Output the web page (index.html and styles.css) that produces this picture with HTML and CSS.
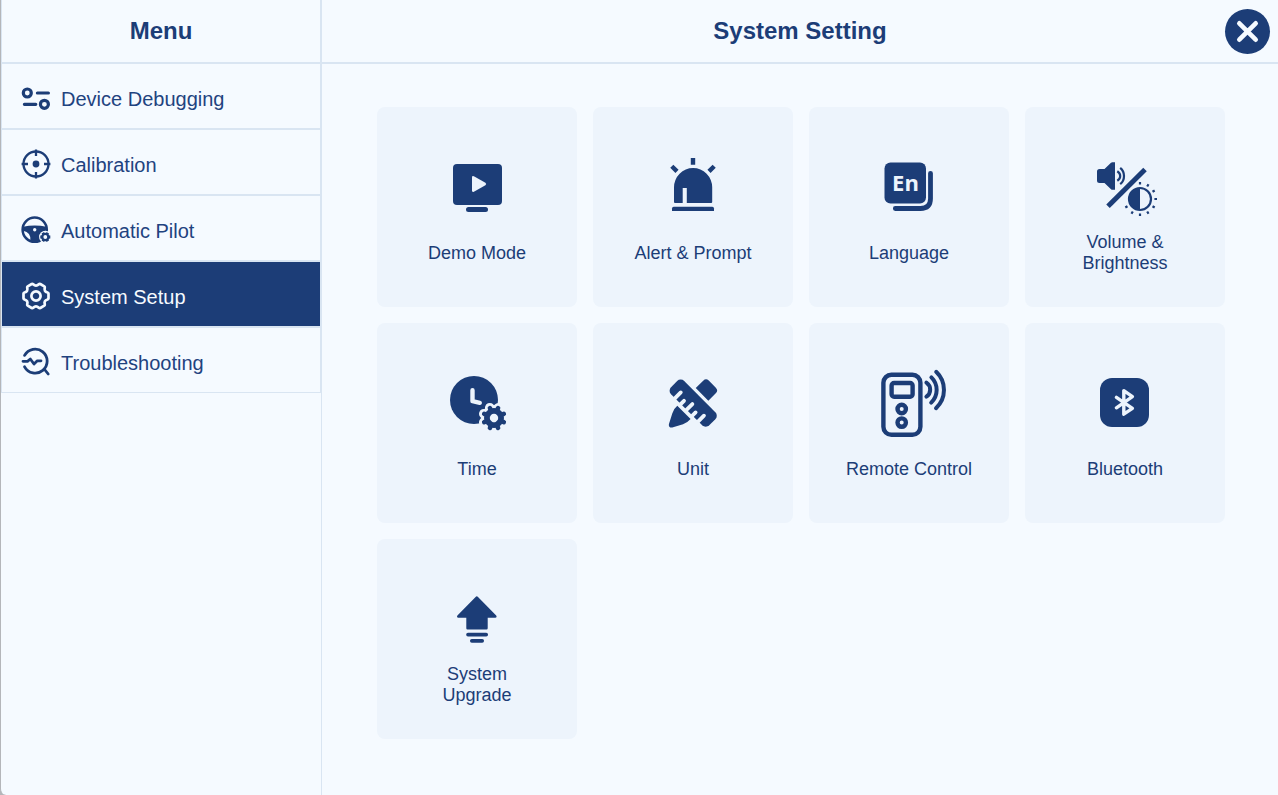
FILE: index.html
```
<!DOCTYPE html>
<html lang="en">
<head>
  <meta charset="utf-8">
  <meta name="viewport" content="width=device-width, initial-scale=1">
  <title>System Setting</title>
  <link rel="stylesheet" href="styles.css">
</head>
<body>
  <div class="app">
    <!-- Side menu -->
    <aside class="sidebar">
      <h2 class="sidebar-title">Menu</h2>
      <nav class="menu">
        <a class="menu-item" href="#debugging">
          <svg class="menu-icon" viewBox="0 0 30 30" fill="none" stroke="currentColor" stroke-width="3.2" stroke-linecap="round">
            <circle cx="6.3" cy="10" r="4"/>
            <path d="M16.4 10H27.4M3.4 21.3H14.8"/>
            <circle cx="23.4" cy="21.3" r="4"/>
          </svg>
          <span class="menu-label">Device Debugging</span>
        </a>
        <a class="menu-item" href="#calibration">
          <svg class="menu-icon" viewBox="0 0 30 30" fill="none" stroke="currentColor" stroke-width="2.3">
            <circle cx="15" cy="15" r="12.5"/>
            <path d="M15 .6V7M15 23V29.4M.6 15H7M23 15H29.4"/>
            <circle cx="15" cy="15" r="3.4" fill="currentColor" stroke="none"/>
          </svg>
          <span class="menu-label">Calibration</span>
        </a>
        <a class="menu-item" href="#pilot">
          <svg class="menu-icon" viewBox="0 0 30 30" fill="currentColor">
            <circle cx="13.7" cy="14.7" r="12.1" fill="none" stroke="currentColor" stroke-width="2.5"/>
            <path d="M2 11.8Q13.7 9.2 25.4 11.8V15.6Q18.6 16.6 18.6 26H9.4Q10.4 17.4 2 15.8Z"/>
            <circle class="cut" cx="13.7" cy="14.7" r="1.7"/>
            <circle class="cut" cx="24.3" cy="22" r="6.2"/>
            <circle cx="24.3" cy="22" r="3.1" fill="none" stroke="currentColor" stroke-width="2.4"/>
            <path d="M19.3 22H20.9M27.7 22H29.3M21.8 17.7L22.6 19.1M26 24.9L26.8 26.3M26.8 17.7L26 19.1M22.6 24.9L21.8 26.3" stroke="currentColor" stroke-width="2.8"/>
          </svg>
          <span class="menu-label">Automatic Pilot</span>
        </a>
        <a class="menu-item active" href="#setup" aria-current="page">
          <svg class="menu-icon" viewBox="-15 -15 30 30" fill="none" stroke="currentColor" stroke-width="2.7" stroke-linejoin="round">
            <path d="M12.5-2.4V2.4Q12.4 3.3 11.6 3.5Q9.6 4.1 8.9 5.3T8.8 8.3Q9 9.2 8.3 9.7L4.3 12Q3.4 12.3 2.8 11.7Q1.4 10.3 0 10.3T-2.8 11.7Q-3.4 12.3-4.3 12L-8.3 9.7Q-9 9.2-8.8 8.3Q-8.2 6.5-8.9 5.3T-11.6 3.5Q-12.4 3.3-12.5 2.4V-2.4Q-12.4-3.3-11.6-3.5Q-9.6-4.1-8.9-5.3T-8.8-8.3Q-9-9.2-8.3-9.7L-4.3-12Q-3.4-12.3-2.8-11.7Q-1.4-10.3 0-10.3T2.8-11.7Q3.4-12.3 4.3-12L8.3-9.7Q9-9.2 8.8-8.3Q8.2-6.5 8.9-5.3T11.6-3.5Q12.4-3.3 12.5-2.4Z"/>
            <circle r="4.6"/>
          </svg>
          <span class="menu-label">System Setup</span>
        </a>
        <a class="menu-item" href="#troubleshooting">
          <svg class="menu-icon" viewBox="0 0 30 30" fill="none" stroke="currentColor" stroke-width="2.8" stroke-linecap="round" stroke-linejoin="round">
            <path d="M3.6 8.4A12 12 0 1 1 3.6 19.8"/>
            <path d="M2 14.3H6.5L9.3 12L13 17L16.3 13.8H20M24 23L27.2 27"/>
          </svg>
          <span class="menu-label">Troubleshooting</span>
        </a>
      </nav>
    </aside>

    <main class="main">
      <header class="main-header">
        <h1 class="main-title">System Setting</h1>
        <button class="close-button" type="button" aria-label="Close">
          <svg viewBox="0 0 45 45" fill="none" stroke="currentColor" stroke-width="4.6" stroke-linecap="round">
            <path d="M14.3 14.3L30.7 30.7M30.7 14.3L14.3 30.7"/>
          </svg>
        </button>
      </header>

      <!-- Setting tiles -->
      <div class="tiles">
        <button class="tile" type="button">
          <svg class="tile-icon" viewBox="0 0 72 72" fill="currentColor">
            <rect x="12" y="12" width="49" height="41" rx="4"/>
            <rect x="25" y="55" width="22" height="5" rx="2.5"/>
            <path class="cut" d="M31 25.5Q31 23.4 32.9 24.3L44.4 30.8Q46 32 44.4 33.2L32.9 39.7Q31 40.6 31 38.5Z"/>
          </svg>
          <span class="tile-label">Demo Mode</span>
        </button>

        <button class="tile" type="button">
          <svg class="tile-icon" viewBox="0 0 72 72" fill="currentColor">
            <path d="M17 35.2A19.1 19.1 0 0 1 55.2 35.2V50Q55.2 51 54.2 51H29.8V36H25.7V51H18Q17 51 17 50Z"/>
            <path d="M15 59V56.5Q15 54.8 16.7 54.8H55.3Q57 54.8 57 56.5V59Z"/>
            <path d="M36 6V12.7M14.8 14.2L20 19.4M57.2 14.2L52 19.4" stroke="currentColor" stroke-width="4.4"/>
          </svg>
          <span class="tile-label">Alert &amp; Prompt</span>
        </button>

        <button class="tile" type="button">
          <svg class="tile-icon" viewBox="0 0 72 72" fill="currentColor">
            <rect x="11.5" y="10.5" width="41.5" height="41" rx="6"/>
            <path d="M57.5 21.3V46.5Q57.5 56.5 47.5 56.5H22.3" fill="none" stroke="currentColor" stroke-width="4.8" stroke-linecap="round"/>
            <text class="cut icon-text" x="32.5" y="39" text-anchor="middle">En</text>
          </svg>
          <span class="tile-label">Language</span>
        </button>

        <button class="tile" type="button">
          <svg class="tile-icon" viewBox="0 0 72 72" fill="currentColor">
            <path d="M10.5 17H15.5L22 10.7Q22.6 10.2 23.4 10.2H26V37.8H23.4Q22.6 37.8 22 37.3L15.5 31H10.5Q8 31 8 28.5V19.5Q8 17 10.5 17Z"/>
            <path d="M28.3 19.2Q31.2 21 31.2 24T28.3 28.8M31.2 15.8Q35 18.8 35 24T31.2 32.2" fill="none" stroke="currentColor" stroke-width="2.2"/>
            <path d="M19 54.2L56 17.4" stroke="currentColor" stroke-width="5"/>
            <g transform="translate(51 47)">
              <circle r="11" fill="none" stroke="currentColor" stroke-width="2.2"/>
              <path d="M0-11A11 11 0 0 0 0 11Z"/>
              <path d="M0-14.4V-17M7.2-12.5L8.5-14.7M12.5-7.2L14.7-8.5M14.4 0H17M12.5 7.2L14.7 8.5M7.2 12.5L8.5 14.7M0 14.4V17M-7.2 12.5L-8.5 14.7M-12.5 7.2L-14.7 8.5" stroke="currentColor" stroke-width="2.2"/>
            </g>
          </svg>
          <span class="tile-label">Volume &amp; Brightness</span>
        </button>

        <button class="tile" type="button">
          <svg class="tile-icon" viewBox="0 0 72 72" fill="currentColor">
            <circle cx="33" cy="32" r="24"/>
            <path class="cut-line" d="M31.5 22.3V33.2L38.8 34.8" stroke-width="4.4"/>
            <g transform="translate(53 50) rotate(22.5)">
              <circle class="cut" r="13"/>
              <path class="cut-line" d="M-11 0H11M0-11V11M-7.8-7.8L7.8 7.8M-7.8 7.8L7.8-7.8" stroke-width="9.6"/>
              <circle r="10"/>
              <path d="M-10.6 0H10.6M0-10.6V10.6M-7.5-7.5L7.5 7.5M-7.5 7.5L7.5-7.5" stroke="currentColor" stroke-width="4.6" stroke-linecap="round"/>
              <circle class="cut" r="4.2"/>
            </g>
          </svg>
          <span class="tile-label">Time</span>
        </button>

        <button class="tile" type="button">
          <svg class="tile-icon" viewBox="0 0 72 72" fill="currentColor">
            <g transform="translate(36.2 35.2) rotate(45)">
              <rect x="-27" y="-9.3" width="54" height="18.6" rx="5"/>
              <path class="cut-line" d="M-16.4 12V1.2M-8.2 12V4.8M0 12V1.2M8.2 12V4.8M16.4 12V1.2" stroke-width="3.8"/>
              <path d="M-8.9-12.5V-23Q-8.9-27-5-27H5Q8.9-27 8.9-23V-12.5Z"/>
              <path d="M-9.4 13.1H9.4Q9.8 18.4 7.6 22L2.4 32Q0 35-2.4 32L-7.6 22Q-9.8 18.4-9.4 13.1Z"/>
            </g>
          </svg>
          <span class="tile-label">Unit</span>
        </button>

        <button class="tile" type="button">
          <svg class="tile-icon" viewBox="0 0 72 72" fill="none" stroke="currentColor" stroke-width="4.4">
            <rect x="10.4" y="6.8" width="37" height="60" rx="8"/>
            <rect x="18.6" y="15" width="21" height="13.8" rx="2.5"/>
            <circle cx="28.7" cy="41" r="4.2"/>
            <circle cx="28.7" cy="54.6" r="4.2"/>
            <path d="M53.4 14.7A8.4 8.4 0 0 1 53.4 28.7M58.4 9.4A17.5 17.5 0 0 1 58.2 34.6M63.2 3.8A25 25 0 0 1 63 40.2" stroke-width="4" stroke-linecap="round"/>
          </svg>
          <span class="tile-label">Remote Control</span>
        </button>

        <button class="tile" type="button">
          <svg class="tile-icon" viewBox="0 0 72 72" fill="currentColor">
            <rect x="11" y="10" width="49" height="49" rx="12"/>
            <path class="cut-line" d="M27.4 29.4L43.4 40.4L34.8 46.2V22.6L43.4 28.6L27.4 39.8" stroke-width="3.4"/>
          </svg>
          <span class="tile-label">Bluetooth</span>
        </button>

        <button class="tile" type="button">
          <svg class="tile-icon" viewBox="0 0 72 72" fill="currentColor">
            <path d="M34.6 12.9Q35.8 11.7 37 12.9L55.2 31.4Q56.4 33.4 54.2 33.7H46.7V44.3Q46.7 45.5 45.5 45.5H26.5Q25.3 45.5 25.3 44.3V33.7H17.4Q15.2 33.4 16.4 31.4Z"/>
            <rect x="25.2" y="48.8" width="21.8" height="3.7" rx="1.8"/>
            <rect x="29" y="55" width="14" height="3.7" rx="1.8"/>
          </svg>
          <span class="tile-label">System Upgrade</span>
        </button>
      </div>
    </main>
  </div>
</body>
</html>
```
FILE: styles.css
```
* { box-sizing: border-box; }

body {
  margin: 0;
  background: #b4b6ba;
  color: #1c3d77;
  font-family: "Liberation Sans", Arial, Helvetica, sans-serif;
}

.app {
  display: flex;
  min-height: 100vh;
  background: #f5faff;
  border-left: 1px solid #b4b6ba;
  border-bottom-left-radius: 6px;
}

/* Side menu */
.sidebar {
  flex: none;
  width: 321px;
  border-right: 1px solid #d9e5f2;
}

.sidebar-title,
.main-title {
  margin: 0;
  font-size: 24px;
  line-height: 28px;
  font-weight: bold;
  text-align: center;
}

.sidebar-title {
  padding: 17px 0;
  border: 1px solid #d9e5f2;
  border-top: none;
}

.menu-item {
  display: flex;
  align-items: center;
  gap: 10px;
  height: 66px;
  padding: 4px 19px 0;
  border: 1px solid #d9e5f2;
  color: #1f437f;
  font-size: 20px;
  text-decoration: none;
}

.menu-item.active {
  background: #1c3d77;
  color: #f5faff;
}

.menu-label {
  padding-top: 2px;
}

.menu-icon {
  flex: none;
  width: 30px;
  height: 30px;
  color: #1c3d77;
}

.active .menu-icon {
  color: #f5faff;
}

.menu-icon .cut {
  fill: #f5faff;
}

/* Settings panel */
.main {
  flex: 1;
  min-width: 0;
}

.main-header {
  display: grid;
  grid-template-columns: 1fr auto 1fr;
  align-items: center;
  height: 64px;
  padding: 0 8px;
  border-bottom: 2px solid #d9e5f2;
}

.main-title {
  grid-column: 2;
}

.close-button {
  justify-self: end;
  width: 45px;
  height: 45px;
  padding: 0;
  border: none;
  border-radius: 50%;
  background: #1c3d77;
  color: #f5faff;
  cursor: pointer;
}

.close-button svg {
  display: block;
}

.tiles {
  display: grid;
  grid-template-columns: repeat(auto-fill, 200px);
  justify-content: center;
  gap: 16px;
  padding: 43px 52px 43px 54px;
}

.tile {
  display: flex;
  flex-direction: column;
  align-items: center;
  justify-content: flex-start;
  height: 200px;
  padding: 45px 35px 0;
  border: none;
  border-radius: 8px;
  background: #edf4fc;
  color: #1c3d77;
  font-family: inherit;
  font-size: 18px;
  line-height: 21px;
  cursor: pointer;
}

.tile-icon {
  flex: none;
  width: 72px;
  height: 72px;
  overflow: visible;
}

.tile-icon .cut {
  fill: #edf4fc;
}

.tile-icon .cut-line {
  fill: none;
  stroke: #edf4fc;
  stroke-linecap: round;
  stroke-linejoin: round;
}

.icon-text {
  font-family: "Open Sans", "Noto Sans", sans-serif;
  font-size: 22px;
  font-weight: bold;
}

.tile-label {
  display: flex;
  align-items: center;
  height: 58px;
}
```
